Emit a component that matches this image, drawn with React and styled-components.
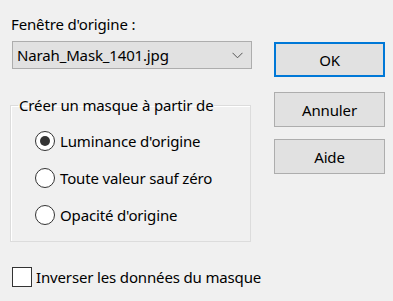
import React from 'react';
import styled, { createGlobalStyle } from 'styled-components';

const GlobalStyle = createGlobalStyle`
  html, body {
    margin: 0;
    padding: 0;
    background: #f0f0f0;
  }
  body {
    font-family: "Noto Sans", "Open Sans", sans-serif;
    font-size: 15px;
    letter-spacing: -0.15px;
    color: #000;
  }
`;

const Dialog = styled.div`
  display: flex;
  width: 393px;
  height: 301px;
  box-sizing: border-box;
  padding-left: 10px;
  background: #f0f0f0;
`;

const LeftColumn = styled.div`
  display: flex;
  flex-direction: column;
  width: 242px;
  white-space: nowrap;
`;

const RightColumn = styled.div`
  display: flex;
  flex-direction: column;
  width: 111px;
  margin-left: 22px;
  padding-top: 42px;
`;

const Label = styled.div`
  margin-top: 14px;
  padding-left: 1px;
  line-height: 20px;
`;

const Combo = styled.div`
  display: flex;
  align-items: center;
  justify-content: space-between;
  box-sizing: border-box;
  width: 240px;
  height: 28px;
  margin: 7px 0 0 2px;
  padding: 0 8px 0 4px;
  background: #e1e1e1;
  border: 1px solid #adadad;
  line-height: 20px;
`;

const GroupBox = styled.fieldset`
  box-sizing: border-box;
  width: 241px;
  min-width: 0;
  margin: 26px 0 0 0;
  padding: 0;
  border: 1px solid #dcdcdc;
  box-shadow: inset 1px 1px 0 #fff;
`;

const Legend = styled.legend`
  margin-left: 7px;
  padding: 0 1px;
  line-height: 20px;
`;

const Options = styled.div`
  display: flex;
  flex-direction: column;
  padding: 7px 0 8px 24px;
`;

const OptionRow = styled.div`
  display: flex;
  align-items: center;
  height: 37px;
  line-height: 20px;
`;

const RadioCircle = styled.span`
  display: flex;
  flex-shrink: 0;
  align-items: center;
  justify-content: center;
  box-sizing: border-box;
  width: 20px;
  height: 20px;
  margin-right: 5px;
  border: 1px solid #333;
  border-radius: 50%;
  background: #fff;

  &::after {
    content: "";
    display: ${p => (p.$checked ? 'block' : 'none')};
    width: 10px;
    height: 10px;
    border-radius: 50%;
    background: #333;
  }
`;

const CheckRow = styled.div`
  display: flex;
  align-items: center;
  margin: 25px 0 0 2px;
  height: 20px;
  line-height: 20px;
`;

const CheckSquare = styled.span`
  flex-shrink: 0;
  box-sizing: border-box;
  width: 20px;
  height: 20px;
  margin-right: 4px;
  border: 1px solid #333;
  background: #fff;
`;

const Button = styled.div`
  display: flex;
  align-items: center;
  justify-content: center;
  box-sizing: border-box;
  height: 35px;
  margin-top: ${p => p.$gap || 0}px;
  background: #e1e1e1;
  border: ${p => (p.$default ? '2px solid #0078d7' : '1px solid #adadad')};
  line-height: 20px;
`;

function Chevron() {
  return (
    <svg width="11" height="7" viewBox="0 0 11 7">
      <polyline points="0.5,0.8 5.5,5.8 10.5,0.8" fill="none" stroke="#555" strokeWidth="1" />
    </svg>
  );
}

const options = [
  { label: "Luminance d'origine", checked: true },
  { label: 'Toute valeur sauf zéro', checked: false },
  { label: "Opacité d'origine", checked: false },
];

export default function App() {
  return (
    <>
      <GlobalStyle />
      <Dialog>
        <LeftColumn>
          <Label>Fenêtre d'origine :</Label>
          <Combo>
            <span>Narah_Mask_1401.jpg</span>
            <Chevron />
          </Combo>
          <GroupBox>
            <Legend>Créer un masque à partir de</Legend>
            <Options>
              {options.map(o => (
                <OptionRow key={o.label}>
                  <RadioCircle $checked={o.checked} />
                  {o.label}
                </OptionRow>
              ))}
            </Options>
          </GroupBox>
          <CheckRow>
            <CheckSquare />
            Inverser les données du masque
          </CheckRow>
        </LeftColumn>
        <RightColumn>
          <Button $default>OK</Button>
          <Button $gap={15}>Annuler</Button>
          <Button $gap={12}>Aide</Button>
        </RightColumn>
      </Dialog>
    </>
  );
}
